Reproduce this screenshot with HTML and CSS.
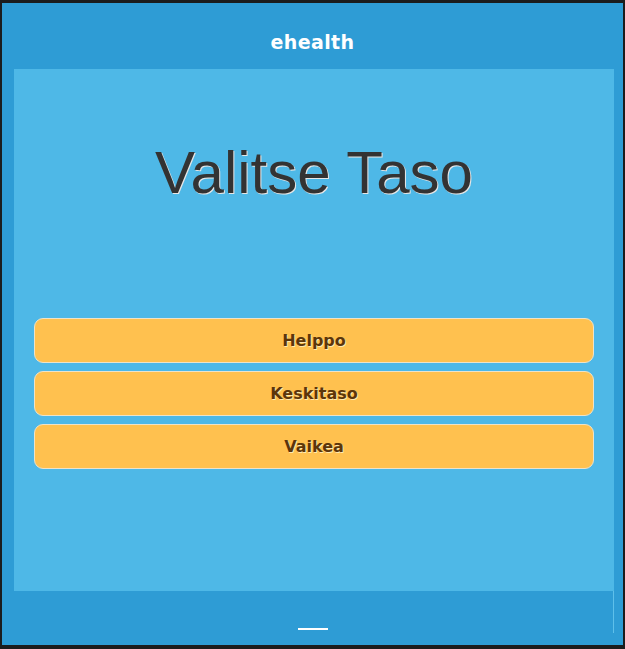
FILE: index.html
```html
<!DOCTYPE html>
<html lang="fi">
<head>
<meta charset="utf-8">
<title>ehealth</title>
<link rel="stylesheet" href="styles.css">
</head>
<body>
<div class="frame">
  <header class="header">ehealth</header>
  <main class="panel">
    <h1 class="title">Valitse Taso</h1>
    <div class="levels">
      <button class="level">Helppo</button>
      <button class="level">Keskitaso</button>
      <button class="level">Vaikea</button>
    </div>
  </main>
  <footer class="footer">
    <div class="footer-inner"><span class="bar"></span></div>
  </footer>
</div>
</body>
</html>
```
FILE: styles.css
```css
html, body {
  margin: 0;
  padding: 0;
  background: #1b1c1d;
  height: 649px;
  overflow: hidden;
}
.frame {
  margin: 3px 2px 0 2px;
  height: 642px;
  background: #2e9cd5;
  display: flex;
  flex-direction: column;
}
.header {
  height: 66px;
  display: flex;
  align-items: center;
  justify-content: center;
  padding-top: 12px;
  box-sizing: border-box;
  color: #ffffff;
  font-family: "DejaVu Sans", sans-serif;
  font-weight: bold;
  font-size: 19px;
  letter-spacing: 0.4px;
}
.panel {
  margin: 0 9px 0 12px;
  height: 522px;
  background: #4eb8e7;
  display: flex;
  flex-direction: column;
}
.title {
  margin: 70px 0 0 0;
  height: 67px;
  line-height: 67px;
  text-align: center;
  font-family: "Liberation Sans", Arial, sans-serif;
  font-weight: normal;
  font-size: 60px;
  color: #333333;
  text-shadow: 1px 1px 0 #e6e6e6;
}
.levels {
  margin: 112px 20px 0 20px;
  display: flex;
  flex-direction: column;
  gap: 8px;
}
.level {
  height: 45px;
  margin: 0;
  padding: 0;
  border: 1px solid #eee3c8;
  border-radius: 9px;
  background: #ffc14f;
  color: #5c360a;
  font-family: "DejaVu Sans", sans-serif;
  font-weight: bold;
  font-size: 16px;
  text-shadow: 1px 1px 0 #ffe9b0;
  cursor: pointer;
}
.footer {
  flex: 1;
  padding: 0 9px 0 12px;
}
.footer-inner {
  height: 42px;
  border-right: 1px solid #5fc0ea;
  display: flex;
  justify-content: center;
  align-items: flex-end;
  padding-bottom: 3px;
  box-sizing: border-box;
}
.bar {
  display: block;
  width: 30px;
  height: 2px;
  background: #ffffff;
  margin-right: 2px;
}
```
